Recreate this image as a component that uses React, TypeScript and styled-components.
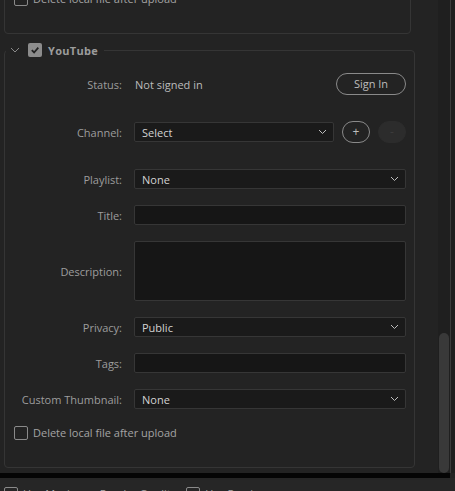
import React from 'react';
import styled, { createGlobalStyle } from 'styled-components';

const GlobalStyle = createGlobalStyle`
    html, body {
        margin: 0;
        padding: 0;
        background: #232323;
        overflow: hidden;
    }
    * {
        box-sizing: border-box;
    }
`;

const Frame = styled.div`
    width: 455px;
    height: 491px;
    display: flex;
    flex-direction: column;
    background: #232323;
    font-family: 'Open Sans', 'Noto Sans', sans-serif;
    font-size: 11px;
    color: #a3a3a3;
`;

const ScrollArea = styled.div`
    display: flex;
    height: 473px;
    flex-shrink: 0;
`;

const Viewport = styled.div`
    width: 438px;
    overflow: hidden;
`;

// scrolled down: the previous group is mostly above the top edge
const Content = styled.div`
    margin-top: -63px;
    padding: 0 24px 0 4px;
    display: flex;
    flex-direction: column;
    gap: 8px;
`;

const ScrollTrack = styled.div`
    width: 12px;
    background: #1f1f1f;
    padding: 333px 1px 0 1px;
`;

const ScrollThumb = styled.div`
    height: 140px;
    border-radius: 5px;
    background: #393939;
`;

const Divider = styled.div`
    width: 1px;
    background: #3b3b3b;
`;

const RightStrip = styled.div`
    flex: 1;
    background: #1e1e1e;
`;

const BlackBar = styled.div`
    height: 5px;
    width: 450px;
    background: #050505;
    flex-shrink: 0;
`;

const Footer = styled.div`
    flex: 1;
    background: #262626;
    display: flex;
    gap: 10px;
    padding: 8px 0 0 4px;
`;

const Group = styled.fieldset`
    margin: 0;
    width: 407px;
    border: 1px solid #353535;
    border-radius: 4px;
    padding: 15px 8px 27px 0;
    display: flex;
    flex-direction: column;
`;

const Legend = styled.legend`
    margin-left: 1px;
    padding: 0 6px 0 4px;
    display: flex;
    align-items: center;
    height: 16px;
`;

const Chevron = styled.svg`
    width: 10px;
    height: 6px;
    margin-right: 8px;
`;

const Title = styled.span`
    font-size: 11px;
    font-weight: 700;
    letter-spacing: 0.3px;
    color: #9c9c9c;
    margin-left: 6px;
`;

const CheckBox = styled.span<{ $checked?: boolean }>`
    width: 14px;
    height: 14px;
    border-radius: 2px;
    flex-shrink: 0;
    display: inline-flex;
    align-items: center;
    justify-content: center;
    background: ${(p) => (p.$checked ? '#8c8c8c' : 'transparent')};
    border: ${(p) => (p.$checked ? 'none' : '1.5px solid #8a8a8a')};
`;

const Row = styled.div<{ $after?: number }>`
    display: grid;
    grid-template-columns: 117px 1fr;
    column-gap: 12px;
    align-items: center;
    margin-bottom: ${(p) => p.$after ?? 16}px;
`;

const Label = styled.label`
    text-align: right;
    color: #9d9d9d;
    white-space: nowrap;
`;

const Value = styled.span`
    color: #bcbcbc;
    padding-left: 1px;
`;

const StatusLine = styled.div`
    display: flex;
    align-items: center;
    justify-content: space-between;
`;

const PillButton = styled.button`
    width: 70px;
    height: 22px;
    border-radius: 11px;
    border: 1px solid #8a8a8a;
    background: transparent;
    color: #bdbdbd;
    font-family: inherit;
    font-size: 11px;
    padding: 0 0 1px;
`;

const FieldWithButtons = styled.div`
    display: flex;
    align-items: center;
    gap: 8px;
`;

const RoundButton = styled.button<{ $disabled?: boolean }>`
    width: 28px;
    height: 22px;
    border-radius: 11px;
    flex-shrink: 0;
    border: 1px solid ${(p) => (p.$disabled ? '#2c2c2c' : '#8a8a8a')};
    background: ${(p) => (p.$disabled ? '#2c2c2c' : 'transparent')};
    color: ${(p) => (p.$disabled ? '#3c3c3c' : '#bdbdbd')};
    font-family: inherit;
    font-size: 12px;
    line-height: 1;
    padding: 0 0 1px;
`;

const Select = styled.div<{ $width?: number }>`
    height: 20px;
    width: ${(p) => (p.$width ? `${p.$width}px` : '100%')};
    background: #1a1a1a;
    border: 1px solid #363636;
    border-radius: 2px;
    display: flex;
    align-items: center;
    justify-content: space-between;
    padding: 0 6px 0 7px;
    color: #d2d2d2;
    font-size: 11px;
`;

const Input = styled.div<{ $tall?: boolean }>`
    height: ${(p) => (p.$tall ? 60 : 20)}px;
    background: #161616;
    border: 1px solid #363636;
    border-radius: 2px;
`;

const CheckRow = styled.div`
    display: flex;
    align-items: center;
    gap: 5px;
    padding-left: 9px;
    color: #a3a3a3;
`;

const FooterItem = styled.div`
    display: flex;
    align-items: center;
    gap: 5px;
    color: #a3a3a3;
`;

const Caret = () => (
    <svg width="9" height="6" viewBox="0 0 9 6">
        <path d="M1 1l3.5 3.5L8 1" fill="none" stroke="#bdbdbd" strokeWidth="1" />
    </svg>
);

const Check = () => (
    <svg width="10" height="10" viewBox="0 0 10 10">
        <path d="M1.8 5.2l2.3 2.3L8.3 2.6" fill="none" stroke="#222" strokeWidth="1.8" />
    </svg>
);

const SelectField = ({ value, width }: { value: string; width?: number }) => (
    <Select $width={width}>
        <span>{value}</span>
        <Caret />
    </Select>
);

export default function App() {
    return (
        <Frame>
            <GlobalStyle />
            <ScrollArea>
                <Viewport>
                    <Content>
                        <Group>
                            <Row $after={18}>
                                <Label>Tags:</Label>
                                <Input />
                            </Row>
                            <CheckRow>
                                <CheckBox />
                                <span>Delete local file after upload</span>
                            </CheckRow>
                        </Group>

                        <Group>
                            <Legend>
                                <Chevron viewBox="0 0 10 6">
                                    <path d="M1 1l4 4 4-4" fill="none" stroke="#8a8a8a" strokeWidth="1" />
                                </Chevron>
                                <CheckBox $checked>
                                    <Check />
                                </CheckBox>
                                <Title>YouTube</Title>
                            </Legend>
                            <Row $after={26}>
                                <Label>Status:</Label>
                                <StatusLine>
                                    <Value>Not signed in</Value>
                                    <PillButton>Sign In</PillButton>
                                </StatusLine>
                            </Row>
                            <Row $after={26}>
                                <Label>Channel:</Label>
                                <FieldWithButtons>
                                    <SelectField value="Select" width={200} />
                                    <RoundButton>+</RoundButton>
                                    <RoundButton $disabled>-</RoundButton>
                                </FieldWithButtons>
                            </Row>
                            <Row>
                                <Label>Playlist:</Label>
                                <SelectField value="None" />
                            </Row>
                            <Row>
                                <Label>Title:</Label>
                                <Input />
                            </Row>
                            <Row>
                                <Label>Description:</Label>
                                <Input $tall />
                            </Row>
                            <Row>
                                <Label>Privacy:</Label>
                                <SelectField value="Public" />
                            </Row>
                            <Row>
                                <Label>Tags:</Label>
                                <Input />
                            </Row>
                            <Row>
                                <Label>Custom Thumbnail:</Label>
                                <SelectField value="None" />
                            </Row>
                            <CheckRow>
                                <CheckBox />
                                <span>Delete local file after upload</span>
                            </CheckRow>
                        </Group>
                    </Content>
                </Viewport>
                <ScrollTrack>
                    <ScrollThumb />
                </ScrollTrack>
                <Divider />
                <RightStrip />
            </ScrollArea>
            <BlackBar />
            <Footer>
                <FooterItem>
                    <CheckBox />
                    <span>Use Maximum Render Quality</span>
                </FooterItem>
                <FooterItem>
                    <CheckBox />
                    <span>Use Previews</span>
                </FooterItem>
            </Footer>
        </Frame>
    );
}
